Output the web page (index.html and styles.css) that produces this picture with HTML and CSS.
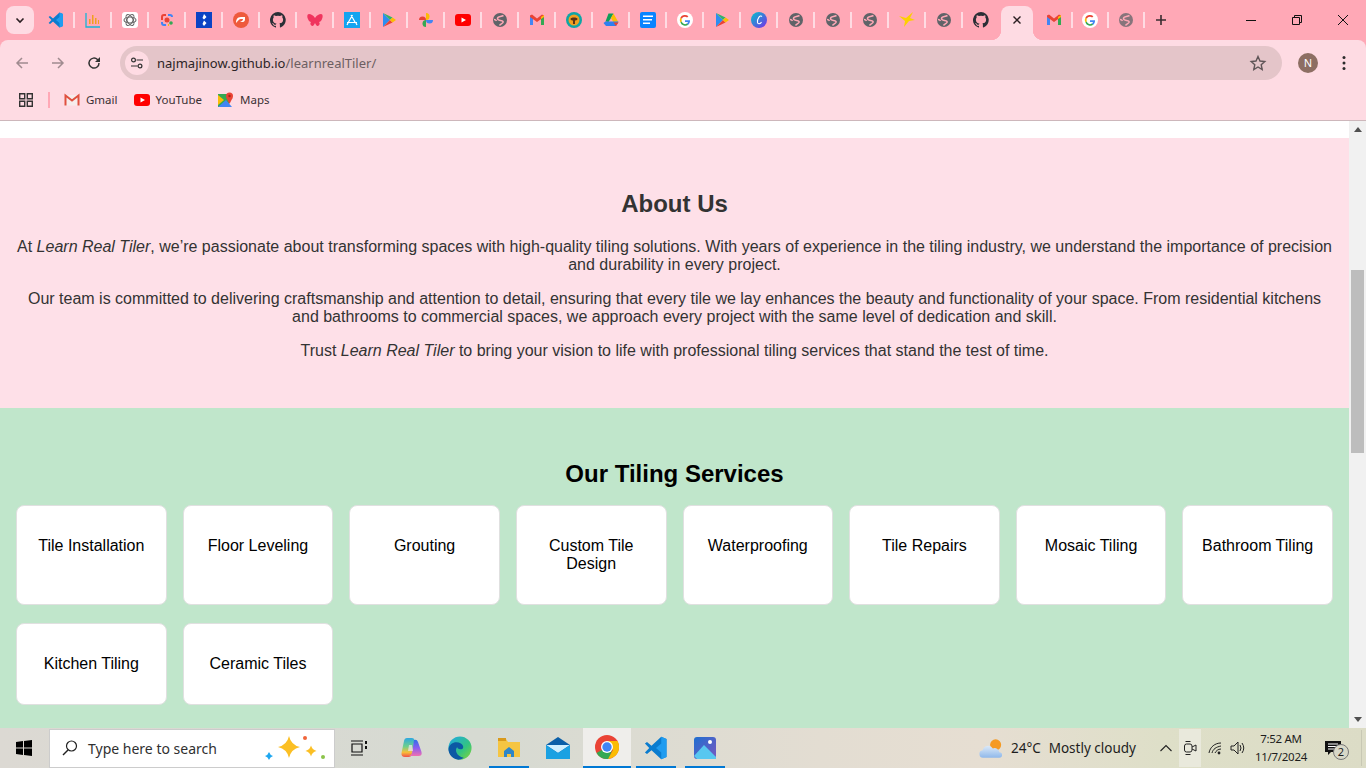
FILE: index.html
```html
<!DOCTYPE html>
<html lang="en">
<head>
  <meta charset="UTF-8" />
  <title>Learn Real Tiler</title>
  <meta name="viewport" content="width=device-width, initial-scale=1" />
  <link rel="stylesheet" href="styles.css">
</head>
<body>
  <svg class="defs" width="0" height="0">
    <symbol id="globe" viewBox="0 0 16 16">
      <circle cx="8" cy="8" r="7" fill="#5f6368"/>
      <path d="M11.500 3.500C9 5 5.500 4 5.500 6.500S10 8 11 9.500 8.500 12 7.500 13.500M2 7.500c1 0 2 .5 2.500 1.500" fill="none" stroke="#ffa8b6" stroke-width="1.500"/>
    </symbol>
    <symbol id="github" viewBox="0 0 16 16">
      <path fill="#2b2f36" fill-rule="evenodd" d="M8 0a8 8 0 0 0-2.500 15.600c.4.100.5-.2.500-.4v-1.400c-2.200.5-2.700-1-2.700-1-.4-.9-.9-1.200-.9-1.200-.7-.5.100-.5.100-.5.800.100 1.200.8 1.200.8.700 1.200 1.900.9 2.300.7.100-.5.300-.9.500-1.100-1.800-.2-3.600-.9-3.600-4 0-.9.300-1.600.8-2.100-.1-.2-.4-1 .1-2.100 0 0 .7-.2 2.200.8a7.600 7.600 0 0 1 4 0c1.500-1 2.200-.8 2.200-.8.400 1.100.2 1.900.1 2.100.5.600.8 1.300.8 2.100 0 3.100-1.900 3.700-3.700 3.900.3.300.5.700.5 1.500v2.200c0 .2.100.5.600.4A8 8 0 0 0 8 0z"/>
    </symbol>
    <symbol id="gmail" viewBox="0 0 16 16">
      <path d="M1 13V4l2-1 1 2v8z" fill="#4285f4"/>
      <path d="M15 13V4l-2-1-1 2v8z" fill="#34a853"/>
      <path d="M1 3.500l2-1 5 4 5-4 2 1v1.500l-7 5-7-5z" fill="#ea4335"/>
      <path d="M12 5l3-2v2l-3 2z" fill="#fbbc04"/>
    </symbol>
    <symbol id="google" viewBox="0 0 16 16">
      <circle cx="8" cy="8" r="8" fill="#fff"/>
      <path d="M13 8.200H8v1.700h3a3.100 3.100 0 0 1-1.200 1.700l1.500 1.200c1-.9 1.700-2.300 1.700-3.800z" fill="#4285f4"/>
      <path d="M4.800 9.300l-1.400 1.100A5.200 5.200 0 0 0 11.300 12.800l-1.500-1.200a3.200 3.200 0 0 1-5-2.300z" fill="#34a853"/>
      <path d="M4.800 9.300a3.200 3.200 0 0 1 0-2.500L3.400 5.600a5.200 5.200 0 0 0 0 4.800z" fill="#fbbc04"/>
      <path d="M8 4.800c.8 0 1.500.3 2.100.8l1.300-1.300A5.200 5.200 0 0 0 3.400 5.600l1.400 1.200A3.200 3.200 0 0 1 8 4.800z" fill="#ea4335"/>
    </symbol>
    <symbol id="play" viewBox="0 0 16 16">
      <path d="M2 1v14l7-7z" fill="#2f8ef0"/>
      <path d="M2 1l7 7 2.500-2.500z" fill="#33b36b"/>
      <path d="M2 15l7-7 2.500 2.500z" fill="#ea4335"/>
      <path d="M11.500 5.500L15 8l-3.500 2.500L9 8z" fill="#fbbc04"/>
    </symbol>
    <symbol id="vscode" viewBox="0 0 16 16">
      <path d="M11.500.500L15 2v12l-3.500 1.500L5 9.500 2 12 .6 11 3.500 8 .6 5 2 4l3 2.500z" fill="#0a7ccf"/>
      <path d="M11.500.500L15 2v12l-3.500 1.500zM11.500 5L8 8l3.500 3z" fill="#1f9cf0"/>
    </symbol>
  </svg>

  <header class="tabstrip">
    <button class="tab-search"><svg width="12" height="12" viewBox="0 0 12 12"><path d="M2.500 4.500L6 8l3.500-3.500" fill="none" stroke="#2b1f22" stroke-width="1.600"/></svg></button>
    <div class="tab-list">
      <span class="tab"><svg class="fav"><use href="#vscode"/></svg></span>
      <span class="tab"><svg class="fav" viewBox="0 0 16 16"><path d="M1 1v14h14" fill="none" stroke="#18b4d8" stroke-width="1.300"/><path d="M4 12V7h1.500v5zM7 12V3h1.500v9zM10 12V6h1.500v6zM13 12V8h1v4z" fill="#f0a020"/></svg></span>
      <span class="tab"><svg class="fav" viewBox="0 0 16 16"><rect width="16" height="16" rx="3" fill="#fff"/><g fill="none" stroke="#666" stroke-width="1.100"><ellipse cx="8" cy="8" rx="6" ry="3"/><ellipse cx="8" cy="8" rx="6" ry="3" transform="rotate(60 8 8)"/><ellipse cx="8" cy="8" rx="6" ry="3" transform="rotate(120 8 8)"/></g></svg></span>
      <span class="tab"><svg class="fav" viewBox="0 0 16 16"><path d="M3 8V5q0-2 2-2h2" fill="none" stroke="#ea4335" stroke-width="2"/><path d="M9 3h2q2 0 2 2" fill="none" stroke="#4285f4" stroke-width="2"/><path d="M3 10v1q0 2 2 2h2" fill="none" stroke="#4285f4" stroke-width="2"/><path d="M9 13h1" stroke="#fbbc04" stroke-width="2"/><circle cx="8" cy="8" r="2.500" fill="#ea4335"/><circle cx="12" cy="11" r="1.800" fill="#34a853"/></svg></span>
      <span class="tab"><svg class="fav" viewBox="0 0 16 16"><rect width="16" height="16" fill="#0b43c4"/><path d="M8 2l2.500 3L8 7.500 6.500 6zM8 8.500L10.500 11 8 14l-1.500-2z" fill="#fff"/></svg></span>
      <span class="tab"><svg class="fav" viewBox="0 0 16 16"><circle cx="8" cy="8" r="8" fill="#ee5a3c"/><path d="M3 11c0-3 1-6 5-6h4v2c0 3-2 3-3 3H7c1-1 3-1 3-3H8c-2 0-3 2-5 4z" fill="#fff"/></svg></span>
      <span class="tab"><svg class="fav"><use href="#github"/></svg></span>
      <span class="tab"><svg class="fav" viewBox="0 0 16 16"><path d="M8 6C6 3 4 2 2 2 0 2 0 5 1 7c.5 2 2 3 3 3-1 1-1 3 1 4 1 .5 2-1 3-3 1 2 2 3.500 3 3 2-1 2-3 1-4 1 0 2.500-1 3-3 1-2 1-5-1-5-2 0-4 1-6 4z" fill="#f0355e"/></svg></span>
      <span class="tab"><svg class="fav" viewBox="0 0 16 16"><rect width="16" height="16" fill="#14a4f0"/><path d="M8.500 3L4 11M7 3l4.500 8M3 10.500h10M3 13l1-2M13 13l-1-2" stroke="#fff" stroke-width="1.200" fill="none"/></svg></span>
      <span class="tab"><svg class="fav"><use href="#play"/></svg></span>
      <span class="tab"><svg class="fav" viewBox="0 0 16 16"><path d="M8 8V1a3.500 3.500 0 0 1 0 7z" fill="#ea4335" transform="rotate(-90 8 8)"/><path d="M8 8V1a3.500 3.500 0 0 1 0 7z" fill="#fbbc04"/><path d="M8 8V1a3.500 3.500 0 0 1 0 7z" fill="#4285f4" transform="rotate(90 8 8)"/><path d="M8 8V1a3.500 3.500 0 0 1 0 7z" fill="#34a853" transform="rotate(180 8 8)"/></svg></span>
      <span class="tab"><svg class="fav" viewBox="0 0 16 16"><rect y="2" width="16" height="12" rx="3" fill="#f00"/><path d="M6.500 5.500v5L11 8z" fill="#fff"/></svg></span>
      <span class="tab"><svg class="fav"><use href="#globe"/></svg></span>
      <span class="tab"><svg class="fav"><use href="#gmail"/></svg></span>
      <span class="tab"><svg class="fav" viewBox="0 0 16 16"><circle cx="8" cy="8" r="8" fill="#0fa5a5"/><circle cx="8" cy="8" r="5.500" fill="#f0a020"/><path d="M4.500 7c0-2 7-2 7 0 0 1-2 1.500-2.500 1.500V12H7V8.500C6.500 8.500 4.500 8 4.500 7z" fill="#5a3414"/></svg></span>
      <span class="tab"><svg class="fav" viewBox="0 0 16 16"><path d="M5.500 1.500h5L8 6l-2.500 4-3-.5z" fill="#0f9d58"/><path d="M10.500 1.500L15.500 10.500h-5L8 6z" fill="#fbbc04"/><path d="M.5 11l2-1.500h13l-2.500 4.500H3z" fill="#2f7ff0"/><path d="M15.500 10.500l-2.500 3.500-2.500-3.500z" fill="#ea4335"/></svg></span>
      <span class="tab"><svg class="fav" viewBox="0 0 16 16"><rect width="16" height="16" rx="2" fill="#0a84ff"/><path d="M3 3.500h10v1.500H3zM3 7h9v1.500H3zM3 10.500h7V12H3z" fill="#fff"/></svg></span>
      <span class="tab"><svg class="fav"><use href="#google"/></svg></span>
      <span class="tab"><svg class="fav"><use href="#play"/></svg></span>
      <span class="tab"><svg class="fav" viewBox="0 0 16 16"><defs><linearGradient id="canva" x1="0" y1="0" x2="1" y2="1"><stop offset="0" stop-color="#00c4cc"/><stop offset="1" stop-color="#7d2ae8"/></linearGradient></defs><circle cx="8" cy="8" r="8" fill="url(#canva)"/><path d="M11 4.500C9 2.500 6 7 6.500 10.500c.3 2 3 1.500 4-.5" fill="none" stroke="#fff" stroke-width="1.100"/></svg></span>
      <span class="tab"><svg class="fav"><use href="#globe"/></svg></span>
      <span class="tab"><svg class="fav"><use href="#globe"/></svg></span>
      <span class="tab"><svg class="fav"><use href="#globe"/></svg></span>
      <span class="tab"><svg class="fav" viewBox="0 0 16 16"><path d="M14 0l-3 6 5 2-6 1-5 6 1-6-6-5 7 2z" fill="#fcd000"/></svg></span>
      <span class="tab"><svg class="fav"><use href="#globe"/></svg></span>
      <span class="tab tab-plain"><svg class="fav"><use href="#github"/></svg></span>
      <span class="tab-active"><svg width="10" height="10" viewBox="0 0 10 10"><path d="M1.500 1.500l7 7M8.500 1.500l-7 7" stroke="#2b1f22" stroke-width="1.400"/></svg></span>
      <span class="tab tab-narrow"><svg class="fav"><use href="#gmail"/></svg></span>
      <span class="tab tab-narrow"><svg class="fav"><use href="#google"/></svg></span>
      <span class="tab tab-narrow tab-dim"><svg class="fav"><use href="#globe"/></svg></span>
    </div>
    <svg class="new-tab" width="12" height="12" viewBox="0 0 12 12"><path d="M6 1v10M1 6h10" stroke="#3a2c30" stroke-width="1.600"/></svg>
    <div class="win-controls">
      <svg width="12" height="12" viewBox="0 0 12 12"><path d="M1 6.500h10" stroke="#111"/></svg>
      <svg width="12" height="12" viewBox="0 0 12 12"><path d="M1.500 3.500h7v7h-7zM3.500 3.500v-2h7v7h-2" fill="none" stroke="#111"/></svg>
      <svg width="12" height="12" viewBox="0 0 12 12"><path d="M1 1l10 10M11 1L1 11" stroke="#111"/></svg>
    </div>
  </header>

  <div class="toolbar">
    <svg class="nav-icon" viewBox="0 0 16 16"><path d="M14 8H3M8 3L3 8l5 5" fill="none" stroke="#a08b90" stroke-width="1.500"/></svg>
    <svg class="nav-icon" viewBox="0 0 16 16"><path d="M2 8h11M8 3l5 5-5 5" fill="none" stroke="#a08b90" stroke-width="1.500"/></svg>
    <svg class="nav-icon" viewBox="0 0 16 16"><path d="M13 8a5 5 0 1 1-1.500-3.500L13.500 6.500" fill="none" stroke="#333" stroke-width="1.500"/><path d="M14 2v5H9z" fill="#333"/></svg>
    <div class="omnibox">
      <span class="site-info"><svg width="14" height="14" viewBox="0 0 14 14"><path d="M6.500 4H13M1 10h6.500" stroke="#333" stroke-width="1.200"/><circle cx="3.500" cy="4" r="1.900" fill="none" stroke="#333" stroke-width="1.200"/><circle cx="10" cy="10" r="1.900" fill="none" stroke="#333" stroke-width="1.200"/></svg></span>
      <span class="url">najmajinow.github.io<span class="url-path">/learnrealTiler/</span></span>
      <svg class="star" width="18" height="18" viewBox="0 0 18 18"><path d="M9 2.500l2 4.500 4.800.5-3.600 3.200 1 4.800L9 13l-4.200 2.500 1-4.800L2.200 7.500 7 7z" fill="none" stroke="#5f5557" stroke-width="1.400"/></svg>
    </div>
    <span class="avatar">N</span>
    <svg class="menu" width="4" height="16" viewBox="0 0 4 16"><circle cx="2" cy="2.500" r="1.500" fill="#2b2b2b"/><circle cx="2" cy="8" r="1.500" fill="#2b2b2b"/><circle cx="2" cy="13.500" r="1.500" fill="#2b2b2b"/></svg>
  </div>

  <div class="bookmarks">
    <svg class="apps" width="14" height="14" viewBox="0 0 14 14"><path d="M.7.700h5v5h-5zM8.300.700h5v5h-5zM.7 8.300h5v5h-5zM8.300 8.300h5v5h-5z" fill="none" stroke="#333" stroke-width="1.400"/></svg>
    <span class="bm-sep"></span>
    <span class="bm"><svg class="fav" viewBox="0 0 16 16"><path d="M1 3h14v10.500H1z" fill="#f6ecec"/><path d="M1.500 13.500V3.500L8 8.500l6.500-5v10" fill="none" stroke="#e0503f" stroke-width="2"/></svg>Gmail</span>
    <span class="bm"><svg class="fav" viewBox="0 0 16 16"><rect y="2" width="16" height="12" rx="3" fill="#f00"/><path d="M6.500 5.500v5L11 8z" fill="#fff"/></svg>YouTube</span>
    <span class="bm"><svg class="fav" viewBox="0 0 16 16"><path d="M0 2h11v13H0z" fill="#34a853"/><path d="M0 15l8-7 6 7z" fill="#4285f4"/><path d="M0 3l6 5-6 5z" fill="#fbbc04"/><circle cx="11.500" cy="4" r="3.500" fill="#ea4335"/><circle cx="11.500" cy="4" r="1.200" fill="#a52714"/><path d="M8.500 6l3 6 3-6z" fill="#ea4335"/></svg>Maps</span>
  </div>

  <div class="viewport">
    <main class="page">
      <div class="page-top"></div>
      <section class="about">
        <h2>About Us</h2>
        <p>At <em>Learn Real Tiler</em>, we’re passionate about transforming spaces with high-quality tiling solutions. With years of experience in the tiling industry, we understand the importance of precision and durability in every project.</p>
        <p>Our team is committed to delivering craftsmanship and attention to detail, ensuring that every tile we lay enhances the beauty and functionality of your space. From residential kitchens and bathrooms to commercial spaces, we approach every project with the same level of dedication and skill.</p>
        <p>Trust <em>Learn Real Tiler</em> to bring your vision to life with professional tiling services that stand the test of time.</p>
      </section>
      <section class="services">
        <h2>Our Tiling Services</h2>
        <div class="service-grid">
          <div class="service-card">Tile Installation</div>
          <div class="service-card">Floor Leveling</div>
          <div class="service-card">Grouting</div>
          <div class="service-card">Custom Tile Design</div>
          <div class="service-card">Waterproofing</div>
          <div class="service-card">Tile Repairs</div>
          <div class="service-card">Mosaic Tiling</div>
          <div class="service-card">Bathroom Tiling</div>
          <div class="service-card">Kitchen Tiling</div>
          <div class="service-card">Ceramic Tiles</div>
        </div>
      </section>
    </main>
    <div class="scrollbar">
      <span class="arrow-up"></span>
      <div class="track"><div class="thumb"></div></div>
      <span class="arrow-down"></span>
    </div>
  </div>

  <footer class="taskbar">
    <svg class="start" width="18" height="18" viewBox="0 0 18 18"><path d="M1 3l7-1v6.500H1zM9 2l8-1v7.500H9zM1 9.500h7V16l-7-1zM9 9.500h8V17l-8-1z" fill="#000"/></svg>
    <div class="search">
      <svg width="18" height="18" viewBox="0 0 18 18"><circle cx="10.500" cy="7" r="5" fill="none" stroke="#222" stroke-width="1.200"/><path d="M7 11l-5 5" stroke="#222" stroke-width="1.400"/></svg>
      <span class="search-text">Type here to search</span>
      <svg class="sparkles" width="62" height="30" viewBox="0 0 62 30"><path d="M26 3q2 9 11 11-9 2-11 11-2-9-11-11 9-2 11-11z" fill="#fbbf24"/><path d="M48 12.500q1 4 5.500 5.500-4.500 1-5.500 5.500-1-4.500-5.500-5.500 4.500-1.500 5.500-5.500z" fill="#fbbf24"/><path d="M6 19q1 3 4 4-3 1-4 4-1-3-4-4 3-1 4-4z" fill="#1ea7f0"/><circle cx="42" cy="5" r="2" fill="#f0653a"/><circle cx="60" cy="24" r="2" fill="#8bc34a"/></svg>
    </div>
    <svg class="task-view" width="18" height="18" viewBox="0 0 18 18"><path d="M2 5h10v8H2zM1 2h12M1 16h12" fill="none" stroke="#111" stroke-width="1.200"/><path d="M15 2h2v3h-2zM15 7h2v3h-2z" fill="#111"/></svg>
    <div class="task-apps">
      <span class="task-app"><svg width="24" height="22" viewBox="0 0 24 22"><defs><linearGradient id="copilot-a" x1="0" y1="0" x2="0" y2="1"><stop offset="0" stop-color="#2fa8e0"/><stop offset=".45" stop-color="#6fd08a"/><stop offset=".75" stop-color="#f8c03a"/><stop offset="1" stop-color="#f0504a"/></linearGradient><linearGradient id="copilot-b" x1="0" y1="0" x2="0" y2="1"><stop offset="0" stop-color="#2f6fe8"/><stop offset=".5" stop-color="#8a5cf0"/><stop offset="1" stop-color="#f070b0"/></linearGradient></defs><path d="M8 1h5q2 0 2.500 2L13 17q-.5 3-3.500 3H6q-4 0-3.500-4L5 4q.5-3 3-3z" fill="url(#copilot-a)"/><path d="M15 3q3-1 4 2l3.500 10q1 4-3 4H10q2 0 3-3z" fill="url(#copilot-b)"/><path d="M10 8h3l1 6h-5z" fill="#f4e4f2" opacity=".7"/></svg></span>
      <span class="task-app"><svg width="24" height="24" viewBox="0 0 26 26"><defs><linearGradient id="edge" x1="0" y1="0" x2="1" y2="1"><stop offset="0" stop-color="#1fa8e8"/><stop offset=".6" stop-color="#33c481"/><stop offset="1" stop-color="#86d633"/></linearGradient></defs><circle cx="13" cy="13" r="12.500" fill="url(#edge)"/><path d="M.5 14C1.500 7 9 5 14 8c3 2 3 5 1.500 6-3 1-5.500 0-5.500-2-3 3-1 10 7 11.500-2 1.500-4.500 2.500-7 2C5 24.500.5 20 .5 14z" fill="#0c59a4"/></svg></span>
      <span class="task-app task-running"><svg width="24" height="22" viewBox="0 0 24 22"><path d="M1 2h8l2 3h12v15H1z" fill="#f5c542"/><path d="M1 1h8v3H1z" fill="#d99a1c"/><path d="M7 14l5-4 5 4v6h-3v-3h-4v3H7z" fill="#2e86c9"/></svg></span>
      <span class="task-app"><svg width="24" height="24" viewBox="0 0 24 24"><path d="M12 1l12 8v14H0V9z" fill="#0a5fa8"/><path d="M0 9h24L12 17z" fill="#cfefff"/><path d="M0 9l12 8 12-8v14H0z" fill="#1ba1e2"/></svg></span>
      <span class="task-app task-chrome"><svg width="24" height="24" viewBox="0 0 24 24"><circle cx="12" cy="12" r="12" fill="#ea4335"/><path d="M12 12L1.600 18A12 12 0 0 0 12 24a12 12 0 0 0 2-.2L18 12z" fill="#34a853"/><path d="M12 6h10.500A12 12 0 0 1 13 24l5-9z" fill="#fbbc04"/><circle cx="12" cy="12" r="6" fill="#fff"/><circle cx="12" cy="12" r="4.700" fill="#4285f4"/></svg></span>
      <span class="task-app task-running"><svg width="24" height="24"><use href="#vscode"/></svg></span>
      <span class="task-app task-running"><svg width="22" height="22" viewBox="0 0 22 22"><defs><linearGradient id="photos" x1="0" y1="0" x2="1" y2="1"><stop offset="0" stop-color="#1f6fd0"/><stop offset="1" stop-color="#7a58c0"/></linearGradient></defs><rect width="22" height="22" rx="3" fill="url(#photos)"/><circle cx="16" cy="5" r="2" fill="#fff"/><path d="M0 19L10 8l12 12v2H3z" fill="#58c7f0"/></svg></span>
    </div>
    <div class="tray">
      <svg width="24" height="21" viewBox="0 0 26 22"><defs><linearGradient id="cloud" x1="0" y1="0" x2="0" y2="1"><stop offset="0" stop-color="#dbe9f8"/><stop offset="1" stop-color="#8fb8ea"/></linearGradient></defs><circle cx="18" cy="7" r="6" fill="#f59a23"/><path d="M5 21a4 4 0 0 1-1-8 6 6 0 0 1 11-2 5 5 0 0 1 7 4 3 3 0 0 1 0 6z" fill="url(#cloud)"/></svg>
      <span class="temp">24°C</span>
      <span class="sky">Mostly cloudy</span>
      <svg class="chev" width="14" height="14" viewBox="0 0 14 14"><path d="M1.500 10L7 4.500l5.500 5.500" fill="none" stroke="#222" stroke-width="1.100"/></svg>
      <span class="meet"><svg width="14" height="16" viewBox="0 0 14 16"><rect x="1.500" y="4" width="7.500" height="8" rx="2" fill="none" stroke="#222"/><path d="M9 7l4-2v6L9 9M2.500 1.500h5M2.500 14.500h5" fill="none" stroke="#222"/></svg></span>
      <svg class="wifi" width="15" height="14" viewBox="0 0 15 14"><path d="M1 12C2 6 7 2 13 2M4 12c1-4 4-6 9-7M7 12c1-2 3-4 6-4" fill="none" stroke="#222"/><circle cx="11" cy="12" r="1.400" fill="#222"/></svg>
      <svg class="vol" width="17" height="14" viewBox="0 0 17 14"><path d="M1 5h3l4-4v12L4 9H1z" fill="none" stroke="#222"/><path d="M10 4q2 3 0 6M12 2q3.500 5 0 10" fill="none" stroke="#222"/></svg>
      <span class="clock">7:52 AM<br>11/7/2024</span>
      <span class="notify"><svg width="16" height="15" viewBox="0 0 16 15"><path d="M0 0h16v11H6l-3 3v-3H0z" fill="#111"/><path d="M3 3h10M3 5.500h10M3 8h7" stroke="#fff"/></svg><span class="notify-count">2</span></span>
      <span class="desk-sep"></span>
    </div>
  </footer>
</body>
</html>
```
FILE: styles.css
```css
* {
  box-sizing: border-box;
}

html,
body {
  margin: 0;
  height: 100%;
  overflow: hidden;
}

body {
  display: flex;
  flex-direction: column;
  font-family: "Liberation Sans", Arial, sans-serif;
  background: #ffa8b6;
}

.defs {
  position: absolute;
}

.fav {
  width: 16px;
  height: 16px;
  flex: none;
}

/* browser tabs */
.tabstrip {
  height: 40px;
  flex: none;
  display: flex;
  align-items: flex-start;
  background: #ffa8b6;
  padding-left: 6px;
}

.tab-search {
  width: 28px;
  height: 28px;
  margin-top: 6px;
  margin-right: 4px;
  border: none;
  border-radius: 8px;
  padding: 0;
  display: flex;
  align-items: center;
  justify-content: center;
  background: #fedbe3;
}

.tab-list {
  display: flex;
  align-items: flex-start;
}

.tab {
  width: 37px;
  height: 16px;
  margin-top: 12px;
  border-right: 2px solid #fedbe3;
  display: flex;
  align-items: center;
  justify-content: center;
}

.tab-narrow {
  width: 36px;
}

.tab-plain {
  border-right-color: transparent;
}

.tab-active {
  position: relative;
  width: 32px;
  height: 34px;
  margin: 6px 4px 0 1px;
  border-radius: 8px 8px 0 0;
  background: #fedbe3;
  display: flex;
  align-items: flex-start;
  justify-content: center;
  padding-top: 9px;
}

.tab-active::before,
.tab-active::after {
  content: "";
  position: absolute;
  bottom: 0;
  width: 10px;
  height: 10px;
}

.tab-active::before {
  left: -10px;
  background: radial-gradient(circle at 0 0, transparent 10px, #fedbe3 10.500px);
}

.tab-active::after {
  right: -10px;
  background: radial-gradient(circle at 100% 0, transparent 10px, #fedbe3 10.500px);
}

.tab-dim .fav {
  opacity: 0.75;
}

.new-tab {
  margin: 14px 0 0 10px;
}

.win-controls {
  margin-left: auto;
  display: flex;
  gap: 34px;
  padding: 14px 17px 0 0;
}

/* address bar */
.toolbar {
  height: 45px;
  flex: none;
  display: flex;
  align-items: center;
  background: #fedbe3;
  border-radius: 8px 8px 0 0;
  padding: 6px 14px 5px 14px;
}

.nav-icon {
  width: 16px;
  height: 16px;
  margin-right: 20px;
  flex: none;
}

.omnibox {
  width: 1162px;
  height: 34px;
  margin-left: -2px;
  border-radius: 17px;
  background: #e4c5c9;
  display: flex;
  align-items: center;
  padding: 0 15px 0 5px;
}

.site-info {
  width: 24px;
  height: 24px;
  border-radius: 50%;
  background: #fedbe3;
  display: flex;
  align-items: center;
  justify-content: center;
}

.url {
  margin-left: 8px;
  font-family: "Noto Sans", sans-serif;
  font-size: 13px;
  color: #2c2426;
}

.url-path {
  color: #6d5f62;
}

.star {
  margin-left: auto;
}

.avatar {
  width: 20px;
  height: 20px;
  margin-left: 16px;
  border-radius: 50%;
  background: #8d6e63;
  color: #fff;
  font-size: 11px;
  display: flex;
  align-items: center;
  justify-content: center;
}

.menu {
  margin-left: 24px;
}

/* bookmarks */
.bookmarks {
  height: 36px;
  flex: none;
  display: flex;
  align-items: center;
  background: #fedbe3;
  border-bottom: 1px solid #cdb7bb;
  padding: 0 0 6px 19px;
  font-family: "Noto Sans", sans-serif;
  font-size: 11.500px;
  color: #3b3134;
}

.bm-sep {
  width: 2px;
  height: 16px;
  margin: 0 14px 0 15px;
  background: #ffa8b6;
}

.bm {
  display: flex;
  align-items: center;
  gap: 6px;
  margin-right: 16px;
}

/* page */
.viewport {
  height: 607px;
  flex: none;
  display: flex;
  overflow: hidden;
  background: #fff;
}

.page {
  flex: 1;
  min-width: 0;
  overflow: hidden;
}

.page-top {
  height: 17px;
}

.about {
  height: 270px;
  padding: 51px 16px 0;
  background: #fee0e8;
  color: #333;
  text-align: center;
  font-size: 16px;
  line-height: 18px;
}

.about h2 {
  margin: 0 0 19px;
  font-size: 24px;
  line-height: 30px;
}

.about p {
  margin: 0 0 16px;
}

.services {
  min-height: 320px;
  padding: 51px 16px 0;
  background: #c0e6cb;
  text-align: center;
}

.services h2 {
  margin: 0 0 16px;
  font-size: 24px;
  line-height: 30px;
  color: #000;
}

.service-grid {
  display: grid;
  grid-template-columns: repeat(8, 1fr);
  gap: 18px 16px;
}

.service-card {
  padding: 31px 15px;
  background: #fff;
  border-radius: 8px;
  border: 1px solid #e0e0e0;
  font-size: 16px;
  line-height: 18px;
  color: #000;
}

/* scrollbar */
.scrollbar {
  width: 17px;
  flex: none;
  display: flex;
  flex-direction: column;
  align-items: center;
  background: #f1f1f1;
}

.arrow-up,
.arrow-down {
  width: 0;
  height: 0;
  margin: 6px 0;
  border-left: 4px solid transparent;
  border-right: 4px solid transparent;
}

.arrow-up {
  border-bottom: 5px solid #505050;
}

.arrow-down {
  border-top: 5px solid #505050;
}

.track {
  flex: 1;
  width: 100%;
  padding: 132px 2px 0;
}

.thumb {
  height: 183px;
  background: #bdbdbd;
}

/* windows taskbar */
.taskbar {
  height: 40px;
  flex: none;
  display: flex;
  align-items: center;
  background: linear-gradient(90deg, #dcd9d3 0%, #d6dad2 35%, #e3ddd2 60%, #e6ded2 72%, #dedfc8 85%, #dcdcc6 100%);
  font-family: "Noto Sans", sans-serif;
  font-size: 13.500px;
  color: #1d1d1d;
}

.start {
  margin: 0 16px 0 15px;
  flex: none;
}

.search {
  width: 286px;
  height: 39px;
  flex: none;
  display: flex;
  align-items: center;
  background: #fff;
  border: 1px solid #ccc;
  padding-left: 11px;
}

.search-text {
  margin-left: 9px;
  font-size: 14px;
  color: #303030;
}

.sparkles {
  margin-left: auto;
  margin-right: 9px;
}

.task-view {
  margin-left: 15px;
  flex: none;
}

.task-apps {
  display: flex;
  margin-left: 19px;
  align-items: stretch;
  height: 40px;
}

.task-app {
  width: 48px;
  margin-right: 1px;
  display: flex;
  align-items: center;
  justify-content: center;
}

.task-running {
  background: linear-gradient(#0078d4, #0078d4) center bottom / 40px 2px no-repeat;
}

.task-chrome {
  background: #efeeeb;
  border-bottom: 2px solid #0078d4;
}

.tray {
  margin-left: auto;
  display: flex;
  align-items: center;
  height: 100%;
}

.temp {
  margin-left: 8px;
}

.sky {
  margin-left: 8px;
}

.chev {
  margin-left: 23px;
}

.meet {
  width: 22px;
  height: 38px;
  margin-left: 6px;
  background: #e9e9dc;
  display: flex;
  align-items: center;
  justify-content: center;
}

.wifi {
  margin-left: 7px;
}

.vol {
  margin-left: 7px;
}

.clock {
  margin-left: 3px;
  width: 62px;
  text-align: center;
  font-size: 11.500px;
  letter-spacing: -0.3px;
  line-height: 18px;
}

.notify {
  position: relative;
  margin-left: 13px;
  width: 24px;
  display: flex;
}

.notify-count {
  position: absolute;
  left: 8px;
  top: 3px;
  width: 16px;
  height: 16px;
  border-radius: 50%;
  border: 1px solid #777;
  background: #d8d8c8;
  font-size: 11px;
  line-height: 14px;
  text-align: center;
}

.desk-sep {
  width: 1px;
  height: 36px;
  margin: 0 4px 0 12px;
  background: #c8c8b4;
}
```
